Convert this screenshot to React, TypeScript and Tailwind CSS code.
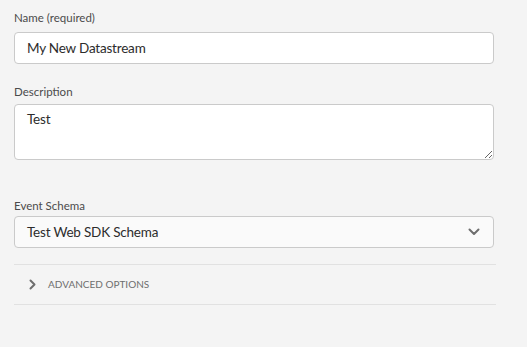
export default function App() {
  const font = { fontFamily: "Lato, 'Open Sans', sans-serif" };
  return (
    <div
      className="w-[527px] h-[347px] bg-[#f4f4f4] pl-[14px] pt-[10px] overflow-hidden"
      style={font}
    >
      <div className="w-[480px] flex flex-col">
        <label className="text-[11.5px] leading-[16px] text-[#4b4b4b] mb-[6px]">
          Name (required)
        </label>
        <input
          className="h-[32px] w-full rounded-[4px] border border-[#cacaca] bg-white px-[12px] text-[13.5px] tracking-[-0.2px] text-[#2c2c2c] outline-none"
          defaultValue="My New Datastream"
        />

        <label className="mt-[20px] text-[11.5px] leading-[16px] text-[#4b4b4b] mb-[4px]">
          Description
        </label>
        <textarea
          className="h-[56px] w-full rounded-[4px] border border-[#cacaca] bg-white px-[12px] pt-[5px] text-[13.5px] tracking-[-0.2px] leading-[18px] text-[#2c2c2c] outline-none"
          defaultValue="Test"
        />

        <label className="mt-[38px] text-[11.5px] leading-[16px] text-[#4b4b4b] mb-[2px]">
          Event Schema
        </label>
        <div className="h-[32px] w-full rounded-[4px] border border-[#cacaca] bg-[#fafafa] pl-[12px] pr-[12px] flex items-center justify-between">
          <span className="text-[13.5px] tracking-[-0.2px] text-[#2c2c2c]">Test Web SDK Schema</span>
          <svg width="12" height="8" viewBox="0 0 12 8" className="mr-[1px]">
            <path
              d="M1.5 1.5 L6 6 L10.5 1.5"
              fill="none"
              stroke="#6e6e6e"
              strokeWidth="2"
              strokeLinecap="round"
              strokeLinejoin="round"
            />
          </svg>
        </div>

        <div className="mt-[16px] w-[482px] h-[41px] border-t border-b border-[#e1e1e1] flex items-center pl-[15px]">
          <svg width="8" height="11" viewBox="0 0 8 11">
            <path
              d="M1.5 1.5 L5.5 5.5 L1.5 9.5"
              fill="none"
              stroke="#6e6e6e"
              strokeWidth="2"
              strokeLinecap="round"
              strokeLinejoin="round"
            />
          </svg>
          <span className="ml-[11px] text-[10px] uppercase text-[#6e6e6e]">
            Advanced Options
          </span>
        </div>
      </div>
    </div>
  );
}
